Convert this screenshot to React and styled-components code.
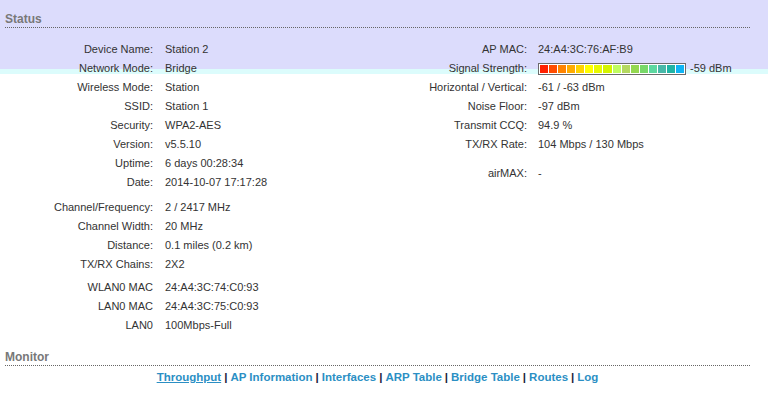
import React from "react";
import styled, { createGlobalStyle } from "styled-components";

const Global = createGlobalStyle`
  html, body { margin: 0; padding: 0; background: #fff; }
  body { font-family: "Liberation Sans", Arial, sans-serif; }
`;

const Page = styled.div`
  min-height: 395px;
  box-sizing: border-box;
  padding: 0 18px 0 5px;
  background: linear-gradient(
    to bottom,
    #dcdcfc 0px,
    #dcdcfc 69px,
    #dcfcfc 69px,
    #dcfcfc 74px,
    #ffffff 74px
  );
  color: #333;
  font-size: 11px;
`;

const Heading = styled.h2`
  margin: ${(p) => (p.$gap ? `${p.$gap}px` : "0")} 0 0;
  padding-top: 12px;
  font-size: 12px;
  line-height: 15px;
  font-weight: bold;
  color: #787878;
  border-bottom: 1px dotted #666;
`;

const Columns = styled.div`
  display: grid;
  grid-template-columns: 372px 1fr;
  margin-top: 12px;
`;

const InfoTable = styled.div`
  display: grid;
  grid-template-columns: ${(p) => p.$labelWidth}px 1fr;
  column-gap: ${(p) => p.$valueGap}px;
  align-content: start;
`;

const Label = styled.div`
  height: 19px;
  line-height: 19px;
  text-align: right;
  white-space: nowrap;
`;

const Value = styled.div`
  height: 19px;
  line-height: 19px;
  white-space: nowrap;
  display: flex;
  align-items: center;
  gap: 4px;
`;

const Spacer = styled.div`
  grid-column: 1 / -1;
  height: ${(p) => p.$h}px;
`;

const Meter = styled.div`
  display: flex;
  gap: 1px;
  width: 144px;
  height: 8px;
  padding: 1px;
  border: 1px solid #6b6b6b;
  background: #fff;
`;

const Segment = styled.span`
  flex: 1;
  background: ${(p) => p.$c};
`;

const LinkBar = styled.div`
  padding-top: 4px;
  text-align: center;
  font-size: 11.5px;
  line-height: 15px;
  font-weight: bold;
  color: #1a1a3a;
`;

const NavLink = styled.a`
  color: #2b8fc4;
  text-decoration: ${(p) => (p.$active ? "underline" : "none")};
  cursor: pointer;
`;

const Sep = styled.span`
  margin: 0 3px;
`;

const signalColors = [
  "#ff2000",
  "#ff4c00",
  "#ff8400",
  "#ffac00",
  "#ffd400",
  "#ffff00",
  "#e8fa00",
  "#d4f400",
  "#c0fc60",
  "#b4d860",
  "#94d850",
  "#78d868",
  "#5cd8a0",
  "#48b8a8",
  "#20b4a4",
  "#10b4f4",
];

const leftRows = [
  ["Device Name:", "Station 2"],
  ["Network Mode:", "Bridge"],
  ["Wireless Mode:", "Station"],
  ["SSID:", "Station 1"],
  ["Security:", "WPA2-AES"],
  ["Version:", "v5.5.10"],
  ["Uptime:", "6 days 00:28:34"],
  ["Date:", "2014-10-07 17:17:28"],
  { spacer: 6 },
  ["Channel/Frequency:", "2 / 2417 MHz"],
  ["Channel Width:", "20 MHz"],
  ["Distance:", "0.1 miles (0.2 km)"],
  ["TX/RX Chains:", "2X2"],
  { spacer: 4 },
  ["WLAN0 MAC", "24:A4:3C:74:C0:93"],
  ["LAN0 MAC", "24:A4:3C:75:C0:93"],
  ["LAN0", "100Mbps-Full"],
];

const SignalValue = () => (
  <>
    <Meter>
      {signalColors.map((c, i) => (
        <Segment key={i} $c={c} />
      ))}
    </Meter>
    <span>-59 dBm</span>
  </>
);

const rightRows = [
  ["AP MAC:", "24:A4:3C:76:AF:B9"],
  ["Signal Strength:", <SignalValue />],
  ["Horizontal / Vertical:", "-61 / -63 dBm"],
  ["Noise Floor:", "-97 dBm"],
  ["Transmit CCQ:", "94.9 %"],
  ["TX/RX Rate:", "104 Mbps / 130 Mbps"],
  { spacer: 10 },
  ["airMAX:", "-"],
];

const links = [
  "Throughput",
  "AP Information",
  "Interfaces",
  "ARP Table",
  "Bridge Table",
  "Routes",
  "Log",
];

const Rows = ({ rows }) =>
  rows.map((r, i) =>
    r.spacer ? (
      <Spacer key={i} $h={r.spacer} />
    ) : (
      <React.Fragment key={i}>
        <Label>{r[0]}</Label>
        <Value>{r[1]}</Value>
      </React.Fragment>
    )
  );

export default function App() {
  return (
    <>
      <Global />
      <Page>
        <Heading>Status</Heading>
        <Columns>
          <InfoTable $labelWidth={148} $valueGap={12}>
            <Rows rows={leftRows} />
          </InfoTable>
          <InfoTable $labelWidth={150} $valueGap={11}>
            <Rows rows={rightRows} />
          </InfoTable>
        </Columns>
        <Heading $gap={3}>Monitor</Heading>
        <LinkBar>
          {links.map((l, i) => (
            <React.Fragment key={l}>
              {i > 0 && <Sep>|</Sep>}
              <NavLink $active={i === 0}>{l}</NavLink>
            </React.Fragment>
          ))}
        </LinkBar>
      </Page>
    </>
  );
}
